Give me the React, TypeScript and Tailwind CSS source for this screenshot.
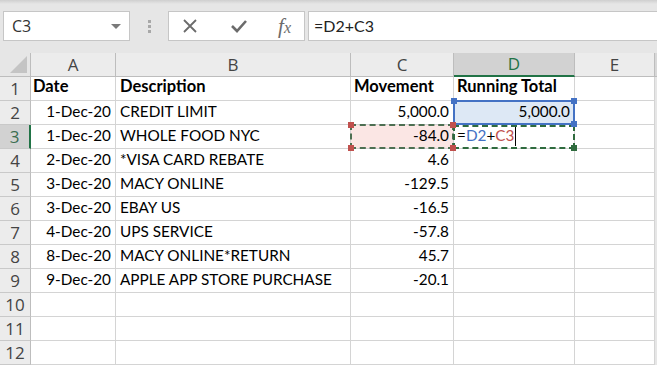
import React from 'react';

const cellFont = { fontFamily: 'Lato, "Liberation Sans", sans-serif' };
const uiFont = { fontFamily: '"Open Sans", "Noto Sans", sans-serif' };

const cols = [
    { key: 'A', w: 'w-[85px]' },
    { key: 'B', w: 'w-[235px]' },
    { key: 'C', w: 'w-[103px]' },
    { key: 'D', w: 'w-[121px]' },
    { key: 'E', w: 'w-[80px]' },
];

const rows: [string, string, string][] = [
    ['1-Dec-20', 'CREDIT LIMIT', '5,000.0'],
    ['1-Dec-20', 'WHOLE FOOD NYC', '-84.0'],
    ['2-Dec-20', '*VISA CARD REBATE', '4.6'],
    ['3-Dec-20', 'MACY ONLINE', '-129.5'],
    ['3-Dec-20', 'EBAY US', '-16.5'],
    ['4-Dec-20', 'UPS SERVICE', '-57.8'],
    ['8-Dec-20', 'MACY ONLINE*RETURN', '45.7'],
    ['9-Dec-20', 'APPLE APP STORE PURCHASE', '-20.1'],
];

const Handle = ({ pos, color }: { pos: string; color: string }) => (
    <span className={`absolute z-20 w-[6px] h-[6px] ${pos} ${color}`} />
);

const ToolbarIcons = () => (
    <div className="flex items-center h-[30px] w-[137px] bg-white border border-[#c6c6c6] px-[13px] justify-between">
        <svg width="16" height="16" viewBox="0 0 16 16">
            <path d="M2 2 L14 14 M14 2 L2 14" stroke="#6b6b6b" strokeWidth="1.8" />
        </svg>
        <svg width="18" height="16" viewBox="0 0 18 16" className="ml-[10px]">
            <path d="M2 8 L7 13 L16 3" stroke="#6b6b6b" strokeWidth="2.6" fill="none" />
        </svg>
        <span className="italic text-[21px] text-[#6b6b6b] leading-none ml-[8px]" style={{ fontFamily: '"Liberation Serif", serif' }}>
            f<span className="text-[16px]">x</span>
        </span>
    </div>
);

export default function App() {
    return (
        <div className="w-[657px] h-[366px] overflow-hidden bg-white relative">
            {/* formula bar */}
            <div className="h-[53px] bg-[#e6e6e6] flex items-start pt-[11px] pl-[3px] relative">
                <div className="absolute top-0 left-0 right-0 h-[4px] bg-gradient-to-b from-[#cfcfcf] to-[#e6e6e6]" />
                <div className="relative w-[127px] h-[30px] bg-white border border-[#c6c6c6] flex items-center pl-[8px] text-[16px] text-[#333]" style={uiFont}>
                    C3
                    <span className="absolute right-[8px] top-[12px] w-0 h-0 border-l-[5px] border-r-[5px] border-t-[5px] border-l-transparent border-r-transparent border-t-[#7a7a7a]" />
                </div>
                <div className="w-[38px] h-[30px] flex flex-col items-center justify-center gap-[2px]">
                    <span className="w-[3px] h-[3px] bg-[#a8a8a8]" />
                    <span className="w-[3px] h-[3px] bg-[#a8a8a8]" />
                    <span className="w-[3px] h-[3px] bg-[#a8a8a8]" />
                </div>
                <ToolbarIcons />
                <div className="flex-1 ml-[3px] h-[30px] bg-white border border-[#c6c6c6] border-r-0 flex items-center pl-[5px] text-[16px] text-[#222]" style={cellFont}>
                    =D2+C3
                </div>
            </div>

            {/* column headers */}
            <div className="flex h-[24px]" style={uiFont}>
                <div className="w-[31px] bg-[#e6e6e6] border-r border-b border-[#bdbdbd] relative">
                    <span className="absolute right-[3px] bottom-[3px] w-0 h-0" style={{ borderBottom: '17px solid #c4c4c4', borderLeft: '17px solid transparent' }} />
                </div>
                {cols.map(c => (
                    <div
                        key={c.key}
                        className={`${c.w} flex items-center justify-center text-[17px] border-r ${c.key === 'D' ? 'bg-[#d2d2d2] text-[#217346] border-b-2 border-b-[#217346] border-r-[#bdbdbd]' : 'bg-[#ececec] text-[#444] border-b border-[#bdbdbd]'}`}
                    >
                        {c.key}
                    </div>
                ))}
                <div className="flex-1 bg-[#d8d8d8] border-b border-[#bdbdbd]" />
            </div>

            {/* rows */}
            {Array.from({ length: 12 }).map((_, i) => {
                const n = i + 1;
                const data = n === 1 ? null : rows[n - 2];
                const isRow3 = n === 3;
                return (
                    <div key={n} className="flex h-[24px]" style={cellFont}>
                        <div
                            className={`w-[31px] flex items-center justify-center text-[17px] border-b border-[#c9c9c9] ${isRow3 ? 'bg-[#d2d2d2] text-[#3b6e50] border-r-2 border-r-[#217346]' : 'bg-[#ececec] text-[#444] border-r border-r-[#bdbdbd]'}`}
                            style={uiFont}
                        >
                            {n}
                        </div>
                        {/* A */}
                        <div className="w-[85px] border-r border-b border-[#d4d4d4] flex items-end justify-end pr-[4px] pb-[1px] text-[15.3px] text-black">
                            {n === 1 ? <span className="font-bold text-[16.5px] mr-auto pl-[2px]">Date</span> : data ? data[0] : ''}
                        </div>
                        {/* B */}
                        <div className="w-[235px] border-r border-b border-[#d4d4d4] flex items-end pl-[4px] pb-[1px] text-[15.3px] text-black whitespace-nowrap">
                            {n === 1 ? <span className="font-bold text-[16.5px]">Description</span> : data ? data[1] : ''}
                        </div>
                        {/* C */}
                        <div
                            className={`relative w-[103px] border-r border-b border-[#d4d4d4] flex items-end pb-[1px] text-[15.3px] text-black ${n === 1 ? 'pl-[3px]' : 'justify-end pr-[4px]'} ${n === 3 ? 'bg-[#fbe6e4]' : ''}`}
                        >
                            {n === 1 ? <span className="font-bold text-[16.5px]">Movement</span> : data ? data[2] : ''}
                            {n === 3 && (
                                <>
                                    <span className="absolute -left-[1px] -top-[1px] -right-[1px] -bottom-[1px] border-2 border-dashed border-[#4d6f52] pointer-events-none" />
                                    <Handle pos="-left-[3px] -top-[3px]" color="bg-[#c0504d]" />
                                    <Handle pos="-right-[3px] -top-[3px]" color="bg-[#c0504d]" />
                                    <Handle pos="-left-[3px] -bottom-[3px]" color="bg-[#c0504d]" />
                                    <Handle pos="-right-[3px] -bottom-[3px]" color="bg-[#c0504d]" />
                                </>
                            )}
                        </div>
                        {/* D */}
                        <div
                            className={`relative w-[121px] border-r border-b border-[#d4d4d4] flex items-end pb-[1px] text-[15.3px] text-black ${n === 1 ? 'pl-[3px]' : n === 2 ? 'justify-end pr-[4px] bg-[#dde8f5]' : 'pl-[3px]'}`}
                        >
                            {n === 1 && <span className="font-bold text-[16.5px] whitespace-nowrap">Running Total</span>}
                            {n === 2 && '5,000.0'}
                            {n === 2 && (
                                <>
                                    <span className="absolute -left-[1px] -top-[1px] -right-[1px] -bottom-[1px] border-2 border-[#4472c4] pointer-events-none" />
                                    <Handle pos="-left-[3px] -top-[3px]" color="bg-[#4472c4]" />
                                    <Handle pos="-right-[3px] -top-[3px]" color="bg-[#4472c4]" />
                                    <Handle pos="-right-[3px] -bottom-[3px]" color="bg-[#4472c4]" />
                                </>
                            )}
                            {n === 3 && (
                                <>
                                    <span className="flex items-end">
                                        =<span className="text-[#4472c4]">D2</span>+<span className="text-[#c0504d]">C3</span>
                                        <span className="inline-block w-[1px] h-[19px] bg-black ml-[1px] mb-[1px]" />
                                    </span>
                                    <span className="absolute -left-[1px] top-[0px] -right-[1px] -bottom-[1px] border-2 border-dashed border-[#2f6b3e] pointer-events-none" />
                                    <Handle pos="-right-[3px] -bottom-[3px]" color="bg-[#2f6b3e]" />
                                </>
                            )}
                        </div>
                        {/* E */}
                        <div className="w-[80px] border-r border-b border-[#d4d4d4]" />
                        <div className="flex-1 bg-[#e6e6e6]" />
                    </div>
                );
            })}
        </div>
    );
}
